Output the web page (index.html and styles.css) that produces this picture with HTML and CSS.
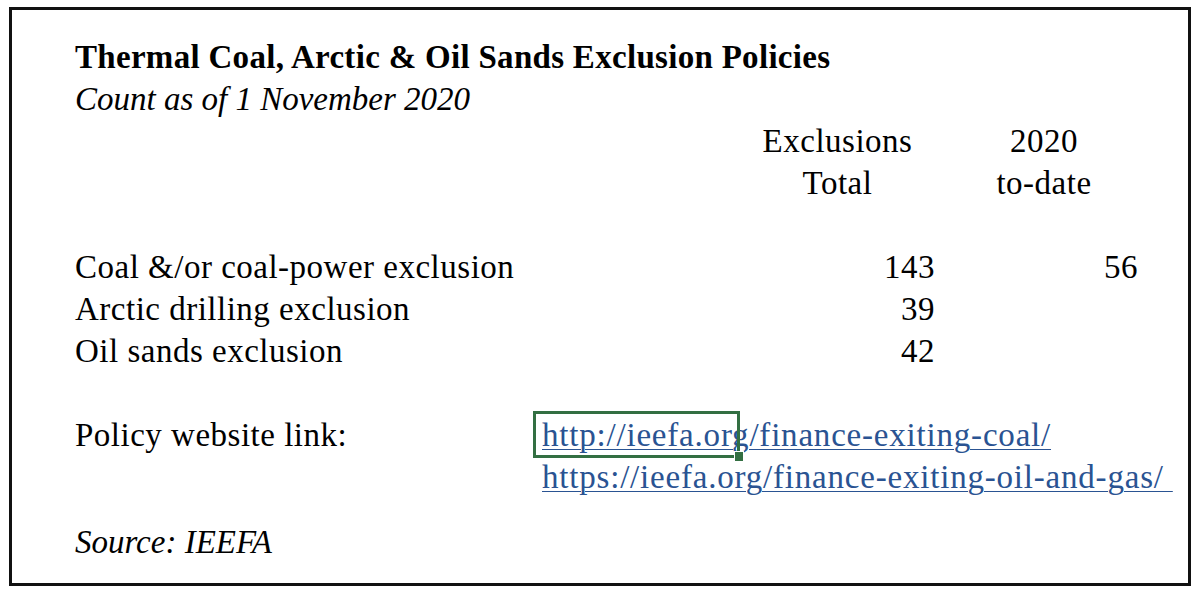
FILE: index.html
```html
<!DOCTYPE html>
<html>
<head>
<meta charset="utf-8">
<link rel="stylesheet" href="styles.css">
</head>
<body>
<div class="frame">
  <div class="title">Thermal Coal, Arctic &amp; Oil Sands Exclusion Policies</div>
  <div class="subtitle">Count as of 1 November 2020</div>
  <div class="table">
    <div class="cell"></div>
    <div class="cell head">Exclusions<br>Total</div>
    <div class="cell head col3">2020<br>to-date</div>
    <div class="cell blank"></div><div class="cell blank"></div><div class="cell blank"></div>
    <div class="cell">Coal &amp;/or coal-power exclusion</div>
    <div class="cell num">143</div>
    <div class="cell num col3">56</div>
    <div class="cell">Arctic drilling exclusion</div>
    <div class="cell num">39</div>
    <div class="cell num col3"></div>
    <div class="cell">Oil sands exclusion</div>
    <div class="cell num">42</div>
    <div class="cell num col3"></div>
  </div>
  <div class="links">
    <div class="links-label">Policy website link:</div>
    <div class="links-list">
      <div class="link-line selected"><a class="link" href="#">http://ieefa.org/finance-exiting-coal/</a><span class="sel-box"></span><span class="sel-handle"></span></div>
      <div class="link-line"><a class="link" href="#">https://ieefa.org/finance-exiting-oil-and-gas/&nbsp;</a></div>
    </div>
  </div>
  <div class="source">Source: IEEFA</div>
</div>
</body>
</html>
```
FILE: styles.css
```css
html, body {
  margin: 0;
  padding: 0;
  background: #ffffff;
}
body {
  padding: 7px 9px 7px 9px;
  font-family: "Liberation Serif", "DejaVu Serif", serif;
  font-size: 33px;
  letter-spacing: 0.5px;
  line-height: 42px;
  color: #000;
}
.frame {
  width: 1182px;
  height: 579px;
  border: 3px solid #111;
  box-sizing: border-box;
  padding: 26px 0 0 63px;
}
.title {
  font-weight: bold;
  letter-spacing: 0.3px;
}
.subtitle {
  font-style: italic;
  letter-spacing: 0;
}
.table {
  display: grid;
  grid-template-columns: 665px 195px 203px;
}
.cell.head {
  text-align: center;
}
.cell.col3 {
  padding-left: 15px;
}
.cell.blank {
  height: 42px;
}
.cell.num {
  text-align: right;
}
.links {
  display: flex;
  margin-top: 42px;
}
.links-label {
  width: 467px;
}
.link-line {
  position: relative;
}
.link {
  color: #2a5392;
  letter-spacing: 0.8px;
  text-decoration: underline;
  text-underline-offset: 3px;
  text-decoration-thickness: 1px;
}
.sel-box {
  position: absolute;
  left: -9px;
  top: -3px;
  width: 207px;
  height: 47px;
  border: 3px solid #336f42;
  box-sizing: border-box;
}
.sel-handle {
  position: absolute;
  left: 192px;
  top: 37px;
  width: 8px;
  height: 9px;
  background: #336f42;
  border: 1px solid #fff;
}
.source {
  font-style: italic;
  letter-spacing: 0;
  margin-top: 23px;
}
```
